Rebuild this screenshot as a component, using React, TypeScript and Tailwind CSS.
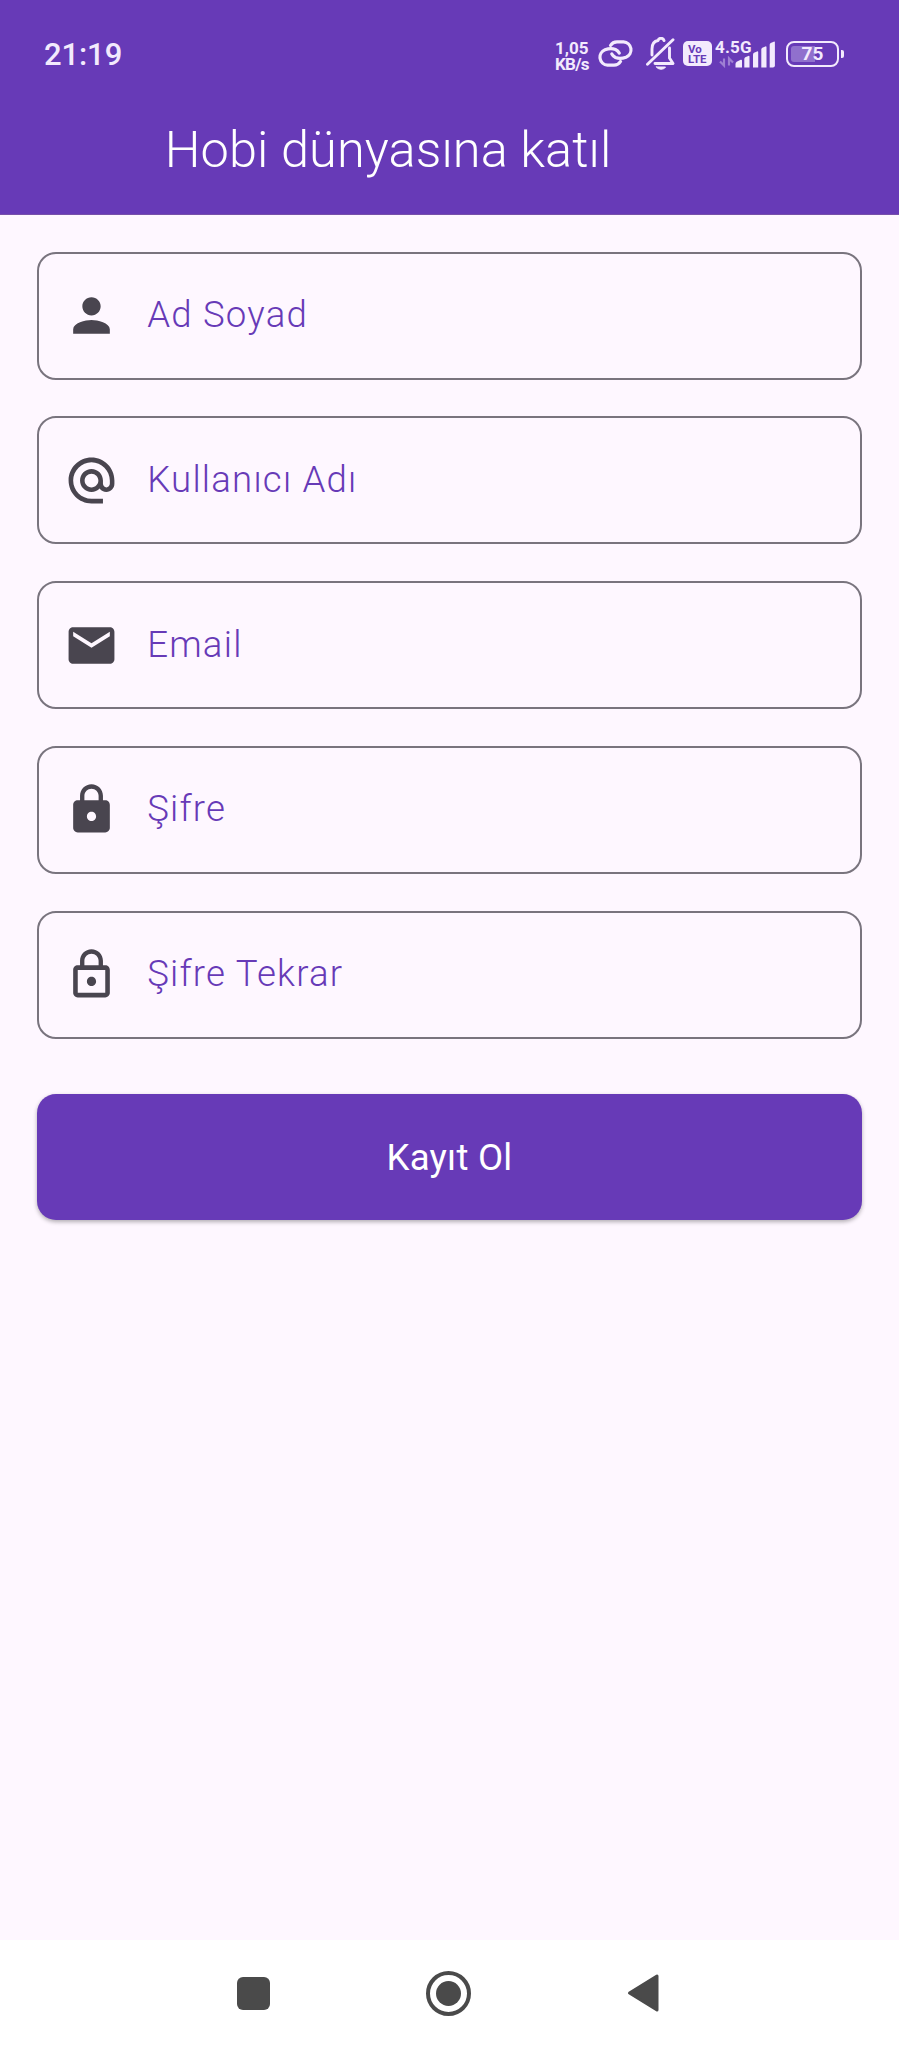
import type { ReactNode } from "react";

const icons = {
  person:
    "M12 12c2.21 0 4-1.79 4-4s-1.79-4-4-4-4 1.79-4 4 1.79 4 4 4zm0 2c-2.67 0-8 1.34-8 4v2h16v-2c0-2.66-5.33-4-8-4z",
  at: "M12 2C6.48 2 2 6.48 2 12s4.48 10 10 10h5v-2h-5c-4.34 0-8-3.66-8-8s3.66-8 8-8 8 3.66 8 8v1.43c0 .79-.71 1.57-1.5 1.57s-1.5-.78-1.5-1.57V12c0-2.76-2.24-5-5-5s-5 2.24-5 5 2.24 5 5 5c1.38 0 2.64-.56 3.54-1.47.65.89 1.77 1.47 2.96 1.47 1.97 0 3.5-1.6 3.5-3.57V12c0-5.52-4.48-10-10-10zm0 13c-1.66 0-3-1.34-3-3s1.34-3 3-3 3 1.34 3 3-1.34 3-3 3z",
  email:
    "M20 4H4c-1.1 0-1.99.9-1.99 2L2 18c0 1.1.9 2 2 2h16c1.1 0 2-.9 2-2V6c0-1.1-.9-2-2-2zm0 4l-8 5-8-5V6l8 5 8-5v2z",
  lock: "M18 8h-1V6c0-2.76-2.24-5-5-5S7 3.24 7 6v2H6c-1.1 0-2 .9-2 2v10c0 1.1.9 2 2 2h12c1.1 0 2-.9 2-2V10c0-1.1-.9-2-2-2zm-6 9c-1.1 0-2-.9-2-2s.9-2 2-2 2 .9 2 2-.9 2-2 2zm3.1-9H8.9V6c0-1.71 1.39-3.1 3.1-3.1 1.71 0 3.1 1.39 3.1 3.1v2z",
  lockOutline:
    "M12 17c1.1 0 2-.9 2-2s-.9-2-2-2-2 .9-2 2 .9 2 2 2zm6-9h-1V6c0-2.76-2.24-5-5-5S7 3.24 7 6v2H6c-1.1 0-2 .9-2 2v10c0 1.1.9 2 2 2h12c1.1 0 2-.9 2-2V10c0-1.1-.9-2-2-2zM8.9 6c0-1.71 1.39-3.1 3.1-3.1s3.1 1.39 3.1 3.1v2H8.9V6zM18 20H6V10h12v10z",
};

function Field({ icon, children }: { icon: keyof typeof icons; children: ReactNode }) {
  return (
    <label className="flex h-[128px] items-center rounded-[19px] border-2 border-[#79747e] pl-[25px]">
      <svg viewBox="0 0 24 24" className="size-[55px] shrink-0 fill-[#49454f]">
        <path d={icons[icon]} />
      </svg>
      <span className="ml-[28.600px] pb-[1px] text-[36.6px] leading-[50px] font-light tracking-[1.22px] text-[#673ab7]">
        {children}
      </span>
    </label>
  );
}

function StatusBar() {
  return (
    <div className="flex h-[107px] items-center pl-[44px] text-[#f3eafd]">
      <span className="w-[511px] pt-[2px] text-[31px] leading-[36px] font-medium tracking-[-0.1px]">21:19</span>
      <div className="w-[43px] pt-[4px] text-[17px] leading-[16px] font-bold">
        <div>1,05</div>
        <div className="tracking-[-0.700px]">KB/s</div>
      </div>
      <svg width="36" height="30" viewBox="0 0 36 30" fill="none" stroke="currentColor" strokeWidth="3.2" strokeLinecap="round">
        <path d="M12.500 6.500C14 4 16 2.800 19 2.800h6.500a8 8 0 0 1 2.500 15.400C25 19.300 20 19.500 17.500 18.500Q15 17.300 13.800 15" />
        <path d="M22.500 22.500C21 25 19 26.200 16 26.200H9.500a8 8 0 0 1-2.500-15.400C10 9.700 15 9.500 17.500 10.500Q20 11.700 21.200 14" />
      </svg>
      <svg width="32" height="34" viewBox="0 0 32 34" className="ml-[11px]" fill="none" stroke="currentColor" strokeWidth="2.900" strokeLinejoin="round" strokeLinecap="round">
        <path d="M2.500 27.300 28 2.800M7 18v-6C7 6.500 10 4 13 3.500c1-3 5-3 6 0M24.500 11v10l3.500 5.500H10" />
        <path d="M11.500 30h9c-1.500 3-7.500 3-9 0Z" fill="currentColor" strokeWidth="1" />
      </svg>
      <div className="ml-[6px] flex h-[25px] w-[29px] flex-col justify-center rounded-[5px] bg-[#f3eafd] pl-[5px] text-[11.500px] leading-[10px] font-bold tracking-[0px] text-[#673ab7]">
        <span>Vo</span>
        <span>LTE</span>
      </div>
      <div className="relative ml-[3px] h-[28px] w-[61px]">
        <svg width="61" height="28" viewBox="0 0 61 28" fill="currentColor">
          <path d="M20.500 27.500v-3.500q0-1.500 1.200-2.200l4-2q1.300-.6 1.300 1V27.500Z" />
          <path d="M29.300 27.500V19q0-1.200 1-1.700l3-1.400q1.200-.5 1.200.8V27.500Z" />
          <path d="M38 27.500V14.500q0-1.200 1-1.700l3-1.400q1.200-.5 1.200.8V27.500Z" />
          <path d="M46.300 27.500V9.500q0-1.200 1-1.700l3-1.400q1.200-.5 1.200.8V27.500Z" />
          <path d="M54.700 27.500V4.800q0-1.200 1-1.700l3-1.400q1.200-.5 1.200.8V25.500q0 2-2 2Z" />
          <path d="M9 18.500v7l-4-4M14 25.500v-7l4 4" fill="none" stroke="currentColor" strokeWidth="2.200" opacity=".4" />
        </svg>
        <span className="absolute top-[-2px] left-0 text-[17px] leading-[18px] font-bold tracking-[0.2px]">4.5G</span>
      </div>
      <div className="ml-[10px] flex h-[26px] w-[53px] items-center justify-center rounded-[8px] border-[2.500px] border-[#f3eafd] bg-linear-to-r from-[#9070cd] from-55% to-transparent to-55% bg-clip-content p-[3px] text-[19px] leading-[20px] font-bold">
        75
      </div>
      <div className="ml-[2px] h-[8px] w-[3px] rounded-r-[2px] bg-[#f3eafd]" />
    </div>
  );
}

export default function App() {
  return (
    <div className="flex h-[2048px] w-[899px] flex-col bg-[#fef7ff] font-[Roboto,sans-serif]">
      <header className="h-[215px] shrink-0 border-b border-[#7750aa] bg-[#673ab7]">
        <StatusBar />
        <h1 className="pt-[14px] pl-[164.700px] text-[50.500px] leading-[58px] font-light tracking-[0.1px] text-white">
          Hobi dünyasına katıl
        </h1>
      </header>
      <main className="flex flex-1 flex-col px-[36.600px] pt-[36.600px]">
        <form className="flex flex-col gap-[36.750px]">
          <Field icon="person">Ad Soyad</Field>
          <Field icon="at">Kullanıcı Adı</Field>
          <Field icon="email">Email</Field>
          <Field icon="lock">Şifre</Field>
          <Field icon="lockOutline">Şifre Tekrar</Field>
          <button
            type="button"
            className="mt-[18.800px] h-[125.800px] rounded-[19px] bg-[#673ab7] pt-[2px] text-[36.600px] font-normal tracking-[0.230px] text-white shadow-[0_2px_4px_rgba(0,0,0,0.3)]"
          >
            Kayıt Ol
          </button>
        </form>
      </main>
      <nav className="flex h-[108.500px] shrink-0 items-center bg-white pb-[1px] pl-[237px]">
        <div className="size-[33px] rounded-[6px] bg-[#4a4a4a]" />
        <div className="ml-[156px] flex size-[45px] items-center justify-center rounded-full border-4 border-[#4a4a4a]">
          <div className="size-[25px] rounded-full bg-[#4a4a4a]" />
        </div>
        <svg width="32" height="40" viewBox="0 0 32 40" className="ml-[156px] fill-[#4a4a4a] stroke-[#4a4a4a]" strokeWidth="3" strokeLinejoin="round">
          <path d="M2.500 20 30 3v34Z" />
        </svg>
      </nav>
    </div>
  );
}
